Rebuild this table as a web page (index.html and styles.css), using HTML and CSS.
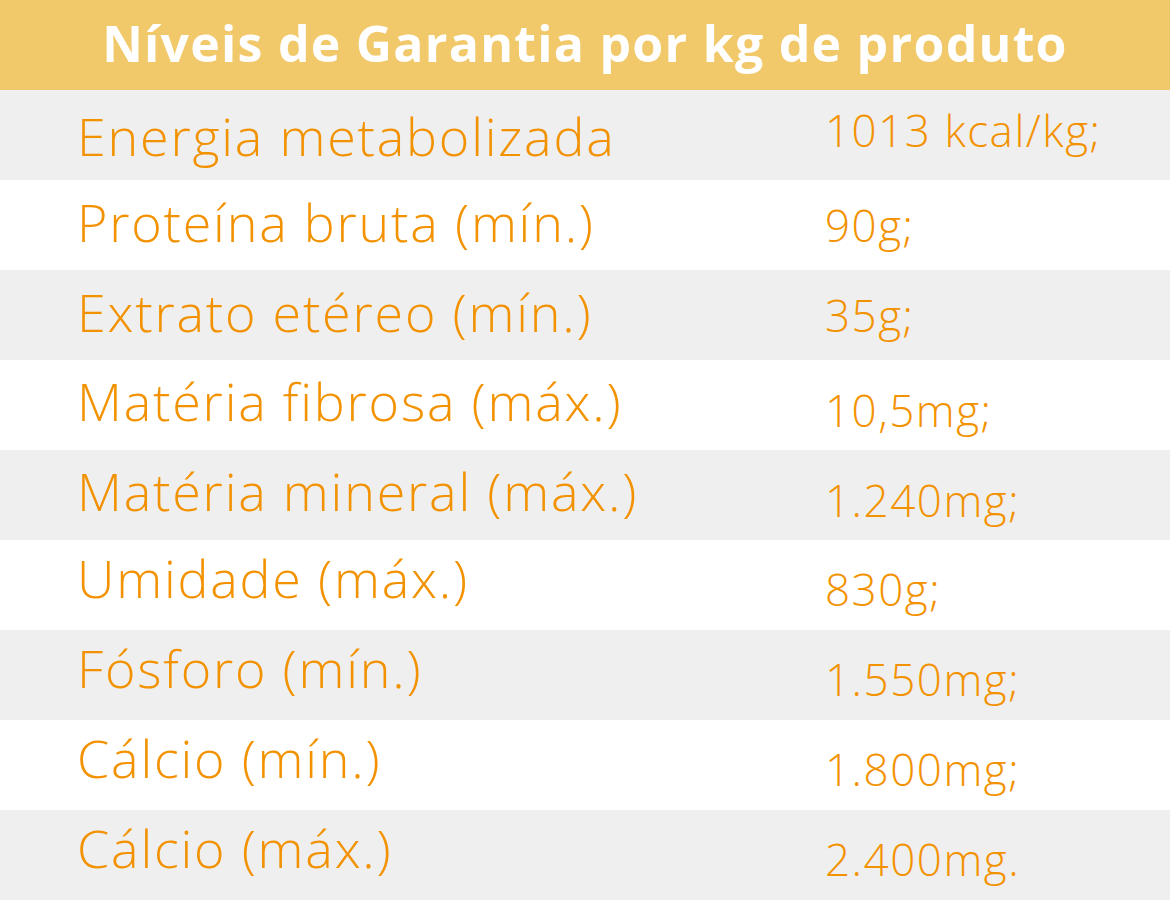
FILE: index.html
```html
<!DOCTYPE html>
<html lang="pt-BR">
<head>
<meta charset="utf-8">
<title>Níveis de Garantia</title>
<link rel="stylesheet" href="styles.css">
</head>
<body>
<div class="table">
  <div class="head">Níveis de Garantia por kg de produto</div>
  <div class="row grey r1"><span class="label">Energia metabolizada</span><span class="value">1013 kcal/kg;</span></div>
  <div class="row r2"><span class="label">Proteína bruta (mín.)</span><span class="value">90g;</span></div>
  <div class="row grey r2"><span class="label">Extrato etéreo (mín.)</span><span class="value">35g;</span></div>
  <div class="row r3"><span class="label">Matéria fibrosa (máx.)</span><span class="value">10,5mg;</span></div>
  <div class="row grey r3"><span class="label">Matéria mineral (máx.)</span><span class="value">1.240mg;</span></div>
  <div class="row r4"><span class="label">Umidade (máx.)</span><span class="value">830g;</span></div>
  <div class="row grey r4"><span class="label">Fósforo (mín.)</span><span class="value">1.550mg;</span></div>
  <div class="row r4"><span class="label">Cálcio (mín.)</span><span class="value">1.800mg;</span></div>
  <div class="row grey r4"><span class="label">Cálcio (máx.)</span><span class="value">2.400mg.</span></div>
</div>
</body>
</html>
```
FILE: styles.css
```css
html, body {
  margin: 0;
  padding: 0;
  background: #ffffff;
}
.table {
  width: 1170px;
  display: flex;
  flex-direction: column;
  font-family: "Open Sans", "Liberation Sans", sans-serif;
}
.head {
  height: 90px;
  box-sizing: border-box;
  background: #f1c96a;
  color: #ffffff;
  font-weight: 700;
  font-size: 50px;
  line-height: 86px;
  letter-spacing: 1.25px;
  text-align: center;
  white-space: nowrap;
}
.row {
  height: 90px;
  box-sizing: border-box;
  display: flex;
  align-items: flex-start;
  background: #ffffff;
  color: #f39200;
  font-weight: 300;
  white-space: nowrap;
}
.row.grey {
  background: #efefef;
}
.label {
  width: 748px;
  padding-left: 77px;
  font-size: 52px;
  line-height: 52px;
  letter-spacing: 1.8px;
}
.value {
  font-size: 44px;
  line-height: 44px;
  letter-spacing: 1.5px;
}
.r1 .label { padding-top: 20px; }
.r1 .value { padding-top: 18px; }
.r2 .label { padding-top: 16px; }
.r2 .value { padding-top: 23px; }
.r3 .label { padding-top: 15px; }
.r3 .value { padding-top: 28px; }
.r4 .label { padding-top: 12px; }
.r4 .value { padding-top: 27px; }
```
